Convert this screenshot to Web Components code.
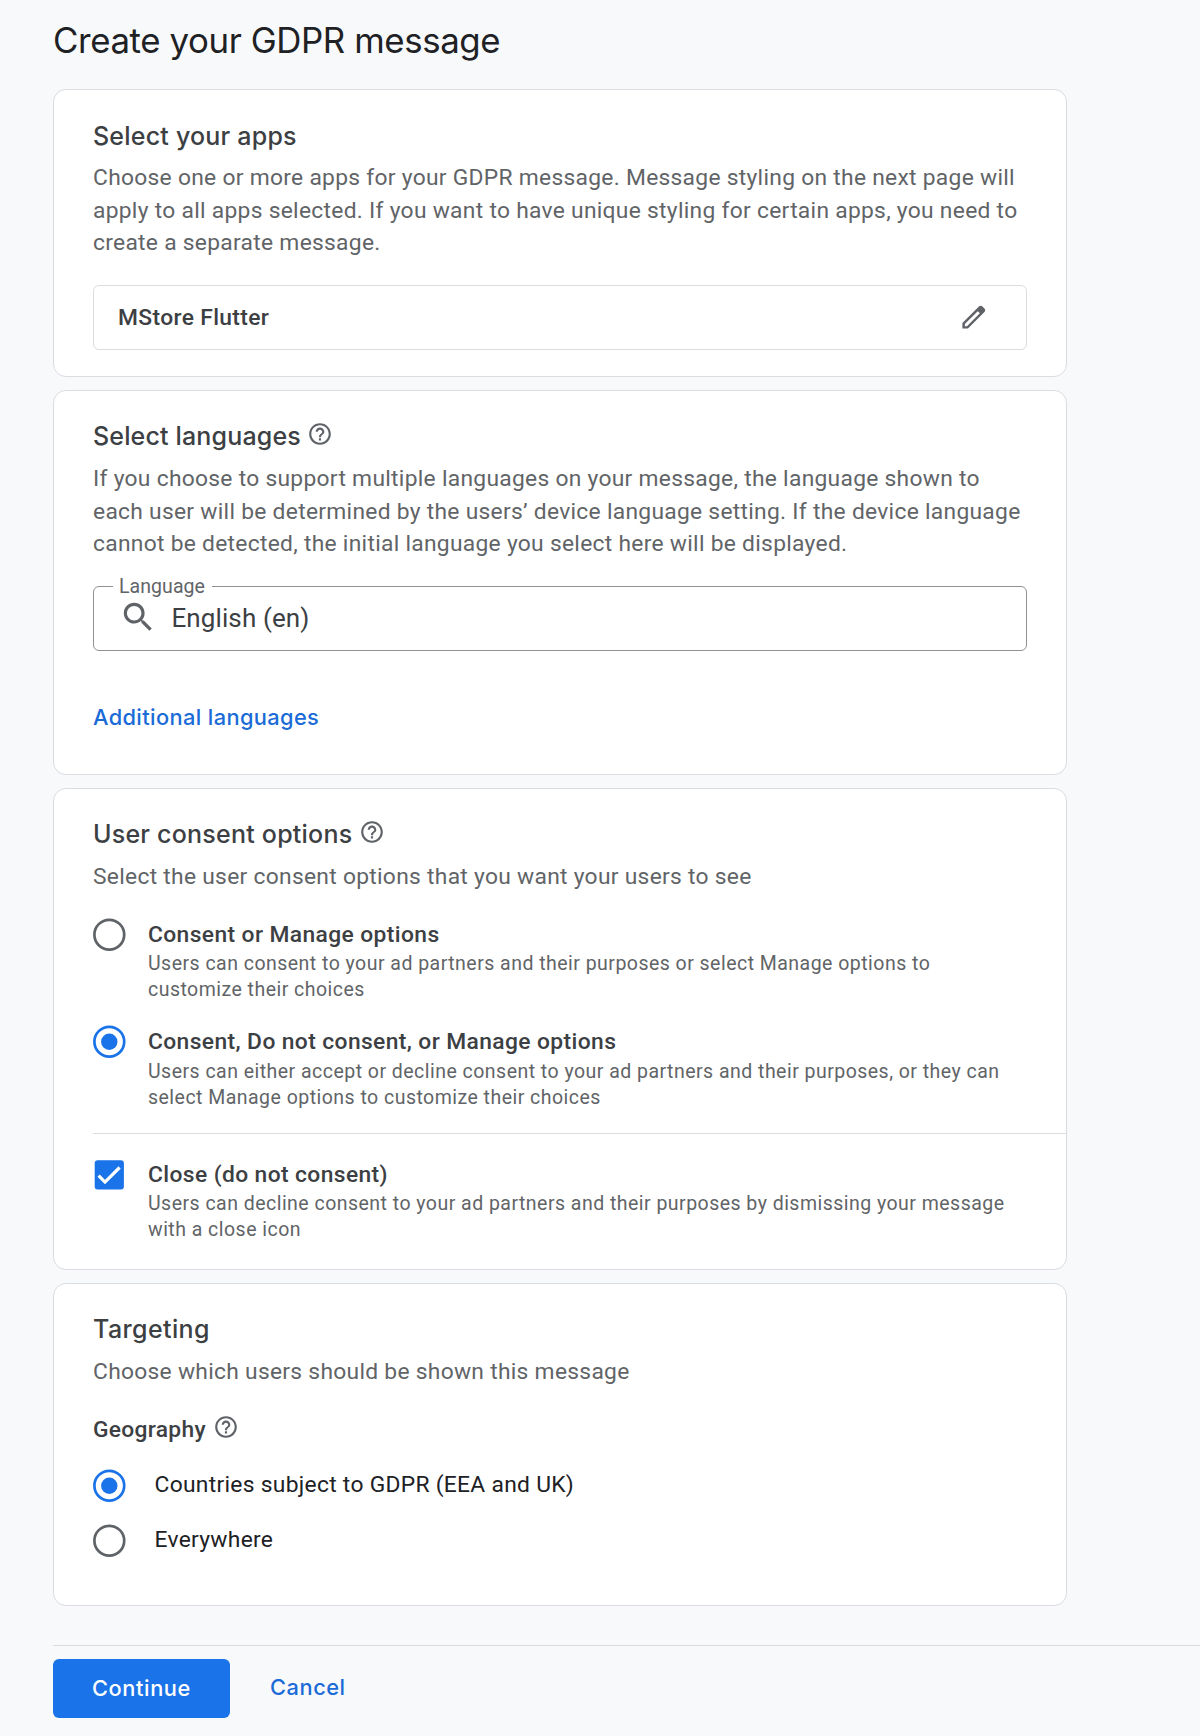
<!DOCTYPE html>
<html lang="en">
<head>
<meta charset="utf-8">
<title>Create your GDPR message</title>
<style>
  html, body { margin: 0; }
  body {
    background: #f8f9fb;
    color: #3c4043;
    font-family: Roboto, "Liberation Sans", sans-serif;
    --display: Inter, Roboto, sans-serif;
    --blue: #1a73e8;
    --grey: #616467;
    --line: #dadce0;
  }
</style>
</head>
<body>
<message-page>
  <span slot="title">Create your GDPR message</span>

  <section-card style="height:288px">
    <card-heading style="--ls:.21px;margin-top:1px;margin-bottom:-1px">Select your apps</card-heading>
    <body-text>Choose one or more apps for your GDPR message. Message styling on the next page will apply to all apps selected. If you want to have unique styling for certain apps, you need to create a separate message.</body-text>
    <app-picker>MStore Flutter</app-picker>
  </section-card>

  <section-card style="height:385px">
    <card-heading help style="--ls:.16px;--gap:6px">Select languages</card-heading>
    <body-text>If you choose to support multiple languages on your message, the language shown to each user will be determined by the users’ device language setting. If the device language cannot be detected, the initial language you select here will be displayed.</body-text>
    <search-field label="Language">English (en)</search-field>
    <text-button style="margin-top:50px;--ls:.38px">Additional languages</text-button>
  </section-card>

  <section-card style="height:482px">
    <card-heading help style="--ls:.225px">User consent options</card-heading>
    <body-text>Select the user consent options that you want your users to see</body-text>
    <choice-option style="margin-top:26px" kind="radio" label="Consent or Manage options">Users can consent to your ad partners and their purposes or select Manage options to customize their choices</choice-option>
    <choice-option style="margin-top:23px;--desc-gap:2px" kind="radio" checked label="Consent, Do not consent, or Manage options">Users can either accept or decline consent to your ad partners and their purposes, or they can select Manage options to customize their choices</choice-option>
    <divider-line></divider-line>
    <choice-option style="margin-top:25px;--icon-top:-2px" kind="checkbox" checked label="Close (do not consent)">Users can decline consent to your ad partners and their purposes by dismissing your message with a close icon</choice-option>
  </section-card>

  <section-card style="height:323px">
    <card-heading style="--ls:.39px">Targeting</card-heading>
    <body-text>Choose which users should be shown this message</body-text>
    <card-heading small help style="margin-top:25px">Geography</card-heading>
    <simple-radio style="margin-top:24px" checked>Countries subject to GDPR (EEA and UK)</simple-radio>
    <simple-radio style="margin-top:22px">Everywhere</simple-radio>
  </section-card>

  <filled-button slot="actions">Continue</filled-button>
  <text-button slot="actions" style="--ls:.55px;margin-bottom:3px">Cancel</text-button>
</message-page>

<script>
const define = (name, render) => customElements.define(name, class extends HTMLElement {
  connectedCallback() {
    if (!this.shadowRoot) this.attachShadow({ mode: 'open' }).innerHTML = render(this);
  }
});

const HELP = `<svg class="help" viewBox="0 0 24 24"><path fill="#5f6368" d="M11 18h2v-2h-2v2zm1-16C6.48 2 2 6.48 2 12s4.48 10 10 10 10-4.48 10-10S17.52 2 12 2zm0 18c-4.41 0-8-3.59-8-8s3.59-8 8-8 8 3.59 8 8-3.59 8-8 8zm0-14c-2.21 0-4 1.79-4 4h2c0-1.1.9-2 2-2s2 .9 2 2c0 2-3 1.75-3 5h2c0-2.25 3-2.5 3-5 0-2.21-1.79-4-4-4z"/></svg>`;

const radioIcon = on => `<svg width="33" height="33" viewBox="0 0 33 33"><circle cx="16.3" cy="16.700" r="14.9" fill="none" stroke="${on ? '#1a73e8' : '#5f6368'}" stroke-width="2.7"/>${on ? '<circle cx="16.3" cy="16.700" r="8.2" fill="#1a73e8"/>' : ''}</svg>`;

const checkIcon = `<svg width="33" height="33" viewBox="0 0 33 33"><rect x="1.7" y="3.300" width="29.2" height="29.2" rx="3" fill="#1a73e8"/><path d="M5.6 18.700l6.4 6.4L26.6 10.500" fill="none" stroke="#fff" stroke-width="3.2"/></svg>`;

define('message-page', () => `
  <style>
    :host { display: flex; flex-direction: column; box-sizing: border-box; height: 1736px; padding: 18px 0 0 53px; overflow: hidden; }
    h1 { margin: 0 0 27px; font: 400 34.8px/44px var(--display); letter-spacing: -.39px; color: #202124; }
    main { display: flex; flex-direction: column; gap: 13px; width: 1014px; }
    footer { display: flex; align-items: center; gap: 40px; margin-top: 39px; padding-top: 13px; border-top: 1px solid var(--line); }
  </style>
  <h1><slot name="title"></slot></h1>
  <main><slot></slot></main>
  <footer><slot name="actions"></slot></footer>`);

define('section-card', () => `
  <style>
    :host { display: flex; flex-direction: column; box-sizing: border-box; padding: 29px 39px 0; background: #fff; border: 1px solid var(--line); border-radius: 13px; }
  </style>
  <slot></slot>`);

define('card-heading', el => `
  <style>
    :host { display: flex; align-items: center; gap: var(--gap, 7px); height: 32px; white-space: nowrap; font: 500 25px/32px var(--display); letter-spacing: var(--ls, 0); }
    :host([small]) { font: 500 22.8px/32px Roboto, sans-serif; letter-spacing: .3px; }
    :host([small]) span { margin-top: 2px; }
    .help { width: 26px; height: 26px; margin-bottom: 4px; }
  </style>
  <span><slot></slot></span>${el.hasAttribute('help') ? HELP : ''}`);

define('body-text', () => `
  <style>
    :host { display: block; margin: 11px 0 -1px; font-size: 22.8px; line-height: 32.667px; letter-spacing: .29px; color: var(--grey); }
  </style>
  <slot></slot>`);

define('app-picker', () => `
  <style>
    :host { display: flex; align-items: center; justify-content: space-between; box-sizing: border-box; height: 65px; margin-top: 26px; padding: 0 37px 0 24px; border: 1px solid var(--line); border-radius: 6px; font-size: 22.8px; font-weight: 500; letter-spacing: .36px; }
    svg { width: 31px; height: 31px; }
  </style>
  <span><slot></slot></span>
  <svg viewBox="0 0 24 24"><path fill="#5f6368" d="M20.3 4.9l-1.2-1.2a2.2 2.2 0 0 0-3.1 0L3.4 16.3V20.600h4.300L20.300 8a2.200 2.200 0 0 0 0-3.100zM6.900 18.700H5.300v-1.600L15.300 7.100l1.600 1.600z"/></svg>`);

define('search-field', el => `
  <style>
    :host { display: block; margin-top: 14px; }
    fieldset { box-sizing: border-box; height: 77px; margin: 0; padding: 0 0 0 25px; border: 1px solid #8f9194; border-radius: 6px; }
    legend { margin-left: -6px; padding: 0 7px 0 6px; font-size: 19.5px; line-height: 25px; letter-spacing: .06px; color: var(--grey); }
    div { display: flex; align-items: center; gap: 14px; height: 39px; font-size: 26px; line-height: 39px; letter-spacing: .12px; }
    svg { width: 38.400px; height: 38.400px; margin-bottom: 2px; flex: none; }
  </style>
  <fieldset>
    <legend>${el.getAttribute('label')}</legend>
    <div>
      <svg viewBox="0 0 24 24"><path fill="#5f6368" d="M15.500 14h-.790l-.280-.270C15.410 12.590 16 11.110 16 9.500 16 5.910 13.090 3 9.500 3S3 5.910 3 9.500 5.910 16 9.500 16c1.610 0 3.090-.590 4.230-1.570l.270.280v.790l5 4.990L20.490 19l-4.990-5zm-6 0C7.010 14 5 11.990 5 9.500S7.010 5 9.500 5 14 7.010 14 9.500 11.990 14 9.500 14z"/></svg>
      <span><slot></slot></span>
    </div>
  </fieldset>`);

define('choice-option', el => `
  <style>
    :host { display: flex; gap: 22px; }
    svg { flex: none; margin-top: var(--icon-top, -1px); }
    .label { font-size: 22.800px; font-weight: 500; line-height: 31px; letter-spacing: .400px; white-space: nowrap; }
    .desc { width: 870px; margin-top: var(--desc-gap, 1px); margin-bottom: calc(1px - var(--desc-gap, 1px)); font-size: 19.500px; line-height: 26px; letter-spacing: .473px; color: var(--grey); }
  </style>
  ${el.getAttribute('kind') === 'checkbox' ? checkIcon : radioIcon(el.hasAttribute('checked'))}
  <div>
    <div class="label">${el.getAttribute('label')}</div>
    <div class="desc"><slot></slot></div>
  </div>`);

define('divider-line', () => `
  <style>:host { display: block; height: 1px; margin: 23px -39px 0 0; background: var(--line); }</style>`);

define('simple-radio', el => `
  <style>
    :host { display: flex; align-items: center; gap: 28.500px; height: 33px; font-size: 22.800px; line-height: 33px; letter-spacing: .300px; color: #202124; }
    span { margin-bottom: 2px; }
  </style>
  ${radioIcon(el.hasAttribute('checked'))}<span><slot></slot></span>`);

define('text-button', () => `
  <style>
    :host { display: block; }
    button { all: unset; display: block; font: 500 21.800px/32px var(--display); letter-spacing: var(--ls, .340px); color: #1a6bd8; cursor: pointer; }
  </style>
  <button><slot></slot></button>`);

define('filled-button', () => `
  <style>
    :host { display: block; }
    button { all: unset; display: block; box-sizing: border-box; width: 177px; height: 59px; border-radius: 6px; background: var(--blue); color: #fff; text-align: center; font: 500 21.800px/57px var(--display); letter-spacing: .600px; cursor: pointer; }
  </style>
  <button><slot></slot></button>`);
</script>
</body>
</html>
